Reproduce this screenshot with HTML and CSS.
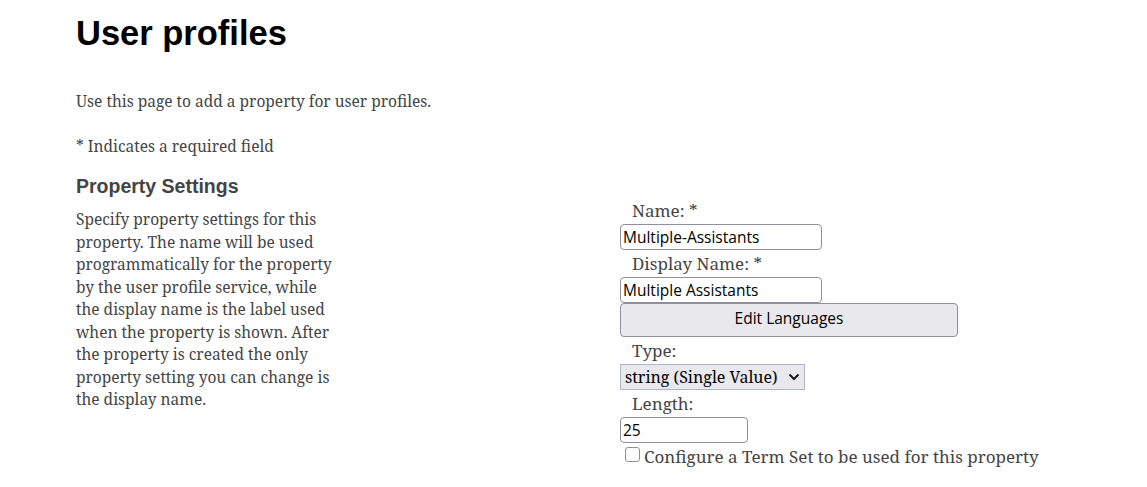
FILE: index.html
```html
<!DOCTYPE html>
<html lang="en">
<head>
  <meta charset="UTF-8" />
  <title>User profiles</title>
  <link rel="stylesheet" href="styles.css">
</head>
<body>

  <div class="page">
    <h1>User profiles</h1>
    <p class="intro">Use this page to add a property for user profiles.</p>
    <p class="intro">* Indicates a required field</p>

    <!-- Property Settings section -->
    <div class="section">
      <div class="section-info">
        <h2>Property Settings</h2>
        <p>Specify property settings for this property. The name will be used programmatically for the property by the user profile service, while the display name is the label used when the property is shown. After the property is created the only property setting you can change is the display name.</p>
      </div>

      <div class="section-fields">
        <label class="field-label" for="propName">Name: *</label>
        <input id="propName" class="text-input" type="text" value="Multiple-Assistants">

        <label class="field-label" for="displayName">Display Name: *</label>
        <input id="displayName" class="text-input" type="text" value="Multiple Assistants">
        <button class="lang-button" type="button">Edit Languages</button>

        <label class="field-label" for="propType">Type:</label>
        <span class="select-wrap">
          <select id="propType" class="type-select">
            <option>string (Single Value)</option>
            <option>string (Multi Value)</option>
            <option>integer</option>
            <option>date</option>
          </select>
          <svg class="select-arrow" width="12" height="8" viewBox="0 0 12 8"><path d="M1.5 1.5 L6 6 L10.5 1.5" fill="none" stroke="#1b1b1b" stroke-width="2"/></svg>
        </span>

        <label class="field-label" for="propLength">Length:</label>
        <input id="propLength" class="text-input short" type="text" value="25">

        <label class="check-row">
          <input type="checkbox" class="check">
          <span>Configure a Term Set to be used for this property</span>
        </label>
      </div>
    </div>
  </div>

</body>
</html>
```

FILE: styles.css
```css
body {
  margin: 0;
  background: #fff;
  color: #444;
  font-family: "Noto Serif", "DejaVu Serif", serif;
  font-size: 15.5px;
}

.page {
  padding: 0 0 0 76px;
}

h1 {
  font-family: "Liberation Sans", Arial, sans-serif;
  font-size: 34.5px;
  color: #000;
  margin: 14px 0 0;
}

.intro {
  margin: 0;
  line-height: 22px;
}

.intro:first-of-type {
  margin-top: 37px;
}

.intro + .intro {
  margin-top: 23px;
}

.section {
  display: grid;
  grid-template-columns: 544px 1fr;
  margin-top: 18px;
}

.section-info h2 {
  font-family: "Liberation Sans", Arial, sans-serif;
  font-size: 19.5px;
  color: #444;
  margin: 0;
  line-height: 22px;
}

.section-info p {
  width: 262px;
  margin: 11px 0 0;
  line-height: 22.5px;
}

.section-fields {
  display: flex;
  flex-direction: column;
  align-items: flex-start;
  padding-top: 22px;
}

.field-label {
  padding-left: 12px;
  font-size: 17px;
  line-height: 27px;
}

.text-input {
  box-sizing: border-box;
  width: 202px;
  height: 26px;
  margin: 0;
  padding: 0 2px;
  border: 1px solid #8f8f9d;
  border-radius: 4px;
  font-family: "Open Sans", "Noto Sans", sans-serif;
  font-size: 15.5px;
  color: #000;
}

.text-input.short {
  width: 128px;
}

.lang-button {
  box-sizing: border-box;
  width: 338px;
  height: 34px;
  margin: 0;
  padding: 0 0 5px;
  background: #e9e9ed;
  border: 1px solid #8f8f9d;
  border-radius: 4px;
  font-family: "Open Sans", "Noto Sans", sans-serif;
  font-size: 15.5px;
  color: #000;
}

.select-wrap {
  position: relative;
  display: inline-block;
}

.type-select {
  appearance: none;
  box-sizing: border-box;
  width: 185px;
  height: 26px;
  margin: 0;
  padding: 0 24px 0 4px;
  background: #e9e9ed;
  border: 1px solid #a9b7c6;
  border-radius: 0;
  font-family: "Noto Serif", "DejaVu Serif", serif;
  font-size: 16px;
  color: #000;
}

.select-arrow {
  position: absolute;
  right: 5px;
  top: 9px;
  pointer-events: none;
}

.check-row {
  display: flex;
  align-items: flex-start;
  font-size: 17px;
  line-height: 28px;
}

.check {
  appearance: none;
  box-sizing: border-box;
  width: 15px;
  height: 15px;
  margin: 4px 4px 0 5px;
  background: #fff;
  border: 1px solid #8f8f9d;
  border-radius: 3px;
}
```
